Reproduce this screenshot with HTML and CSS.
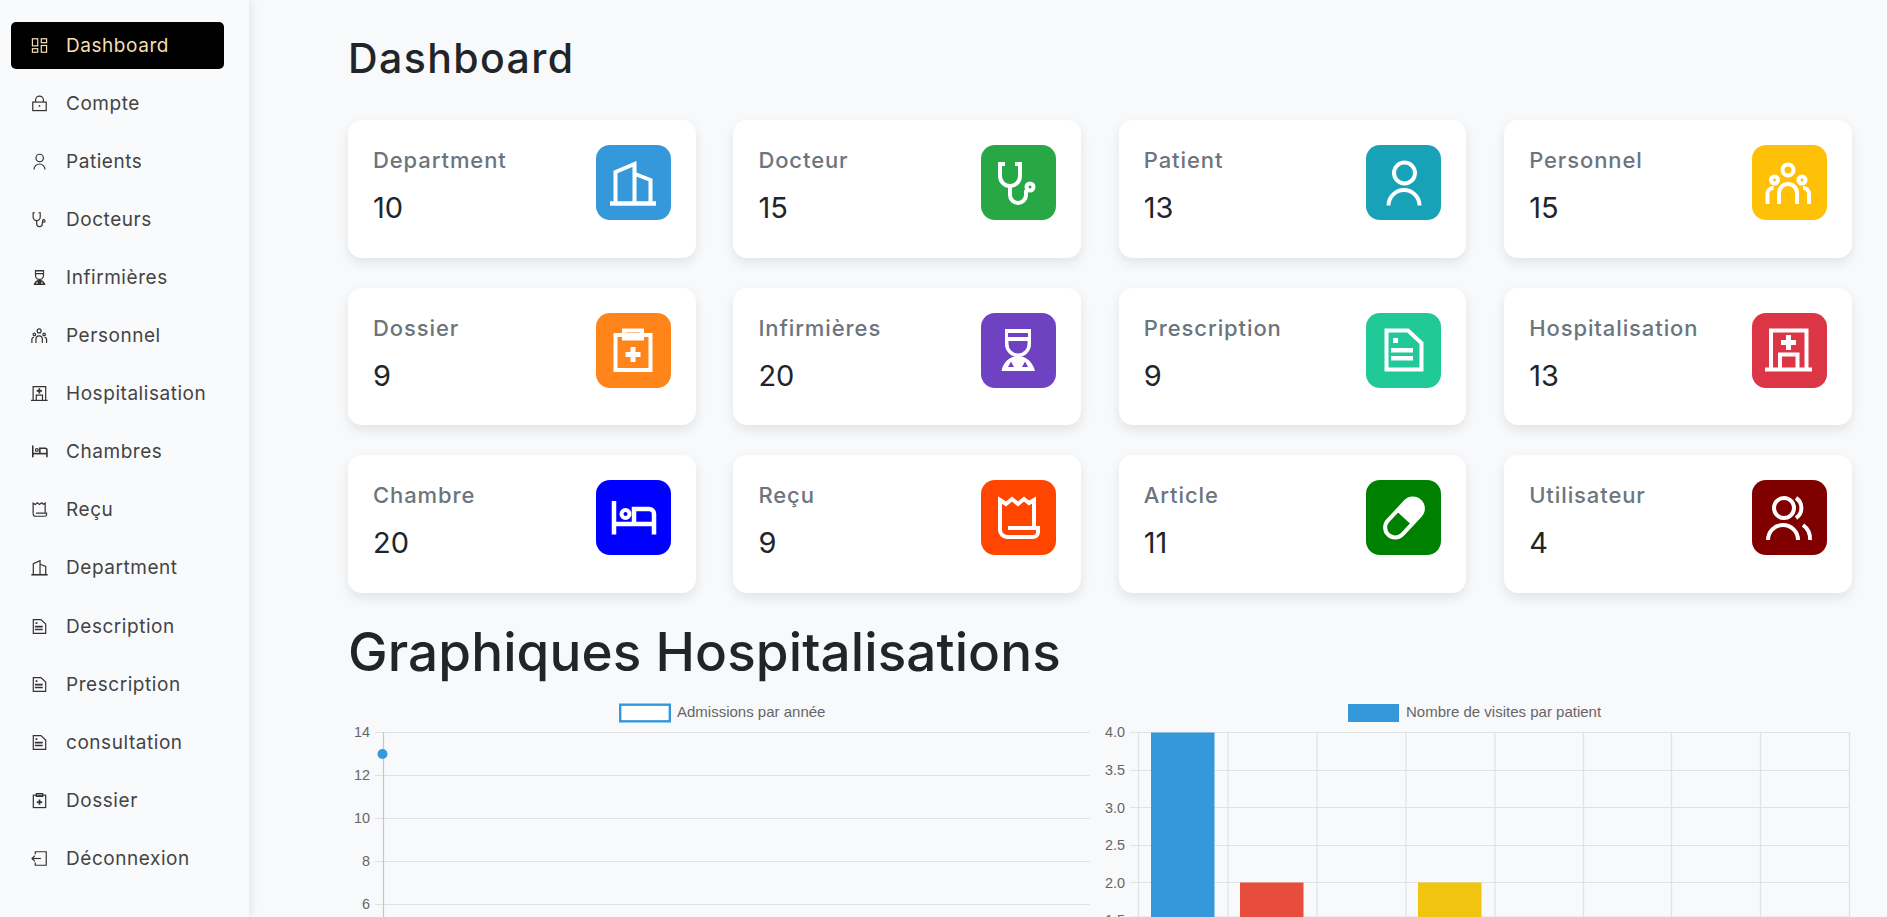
FILE: index.html
```html
<!DOCTYPE html>
<html lang="fr">
<head>
<meta charset="utf-8">
<title>Dashboard</title>
<link rel="stylesheet" href="styles.css">
</head>
<body>
<svg class="defs" width="0" height="0" aria-hidden="true">
  <symbol id="i-grid" viewBox="0 0 48 48"><rect x="4" y="5" width="15" height="20"/><rect x="29" y="5" width="15" height="11"/><rect x="4" y="33" width="15" height="10"/><rect x="29" y="24" width="15" height="19"/></symbol>
  <symbol id="i-lock" viewBox="0 0 48 48"><rect x="5" y="20" width="38" height="24"/><path d="M13 20v-6a11 11 0 0 1 22 0v6"/><circle class="f" cx="24" cy="31" r="2.5"/></symbol>
  <symbol id="i-building" viewBox="0 0 48 48"><path d="M1 44.500H47" class="thick"/><path d="M6.500 44V13L25.500 5V44"/><path d="M26 15L41.500 21V44"/></symbol>
  <symbol id="i-steth" viewBox="0 0 48 48"><path d="M11 5H6V17a10 10 0 0 0 20 0V5H21"/><path d="M16 27V36a8 8 0 0 0 16 0V31"/><circle cx="36" cy="28" r="3.500"/></symbol>
  <symbol id="i-user" viewBox="0 0 48 48"><circle cx="24.500" cy="14" r="10.500"/><path d="M8.500 46.500a15.500 15.500 0 0 1 31 0"/></symbol>
  <symbol id="i-group" viewBox="0 0 48 48"><circle cx="23" cy="11" r="5.500"/><circle cx="9.500" cy="21" r="3.500"/><circle cx="37" cy="21" r="3.500"/><path d="M14 45V34a9 9 0 0 1 18 0V45"/><path d="M2.500 45V35a6 6 0 0 1 6-6"/><path d="M44 45V35a6 6 0 0 0-6-6"/></symbol>
  <symbol id="i-clip" viewBox="0 0 48 48"><rect x="6.500" y="9" width="35" height="35"/><rect x="15" y="4.500" width="18" height="8"/><path class="f" d="M21.500 21h5v5h5v5h-5v5h-5v-5h-5v-5h5z"/></symbol>
  <symbol id="i-nurse" viewBox="0 0 48 48"><path class="f" fill-rule="evenodd" d="M11 3H37V18a13 13 0 0 1-26 0ZM14 7V11H34V7ZM14.500 15V18a9.500 9.500 0 0 0 19 0V15Z"/><path class="f" fill-rule="evenodd" d="M7.500 45C9 37 15 30 24 30C33 30 39 37 41 45ZM14 41H20L17 35.500ZM28 41H34L31 35.500Z"/></symbol>
  <symbol id="i-doc" viewBox="0 0 48 48"><path d="M6.500 4.500H28L41.500 17V43.500H6.500Z"/><path class="f" d="M13 12h5v5h-5zM11 22h22v4.500H11zM11 30h22v4.500H11z"/></symbol>
  <symbol id="i-hosp" viewBox="0 0 48 48"><path d="M0 43.500H47"/><path d="M6 43V4.500H41.500V43"/><path class="f" d="M21 9h5v5h5v5h-5v5h-5v-5h-5v-5h5z"/><path d="M15 43V28.500H32.500V43"/></symbol>
  <symbol id="i-bed" viewBox="0 0 48 48"><path class="thick" d="M5 7V40.500"/><path class="thick" d="M5 30H45"/><path class="thick" d="M45 40.500V20a5 5 0 0 0-5-5H25V29"/><circle cx="16.500" cy="20" r="4"/></symbol>
  <symbol id="i-receipt" viewBox="0 0 48 48"><path d="M6 36V6L12 10 18 5 24 10 30 5 35 9 40 6V33"/><path d="M6 36a7 7 0 0 0 7 7H39a5 5 0 0 0 5-5V34H14"/></symbol>
  <symbol id="i-pill" viewBox="0 0 48 48"><g transform="rotate(43 24 24)"><rect x="14" y="1" width="20" height="46" rx="10"/><path class="f" d="M14 24V11a10 10 0 0 1 20 0V24Z"/></g></symbol>
  <symbol id="i-users" viewBox="0 0 48 48"><circle cx="19" cy="14" r="10"/><path d="M3 46a15 15 0 0 1 30 0"/><path d="M31 4a12 12 0 0 1 0 20"/><path d="M38 31a17 17 0 0 1 7 15"/></symbol>
  <symbol id="i-logout" viewBox="0 0 48 48"><path d="M12 12V5H43V43H12V35"/><path d="M28 24H3"/><path d="M11 16L3 24 11 32"/></symbol>
</svg>

<div class="app">
  <nav class="sidebar">
    <a class="nav-item active"><svg class="nav-ic"><use href="#i-grid"/></svg>Dashboard</a>
    <a class="nav-item"><svg class="nav-ic"><use href="#i-lock"/></svg>Compte</a>
    <a class="nav-item"><svg class="nav-ic"><use href="#i-user"/></svg>Patients</a>
    <a class="nav-item"><svg class="nav-ic"><use href="#i-steth"/></svg>Docteurs</a>
    <a class="nav-item"><svg class="nav-ic"><use href="#i-nurse"/></svg>Infirmières</a>
    <a class="nav-item"><svg class="nav-ic"><use href="#i-group"/></svg>Personnel</a>
    <a class="nav-item"><svg class="nav-ic"><use href="#i-hosp"/></svg>Hospitalisation</a>
    <a class="nav-item"><svg class="nav-ic"><use href="#i-bed"/></svg>Chambres</a>
    <a class="nav-item"><svg class="nav-ic"><use href="#i-receipt"/></svg>Reçu</a>
    <a class="nav-item"><svg class="nav-ic"><use href="#i-building"/></svg>Department</a>
    <a class="nav-item"><svg class="nav-ic"><use href="#i-doc"/></svg>Description</a>
    <a class="nav-item"><svg class="nav-ic"><use href="#i-doc"/></svg>Prescription</a>
    <a class="nav-item"><svg class="nav-ic"><use href="#i-doc"/></svg>consultation</a>
    <a class="nav-item"><svg class="nav-ic"><use href="#i-clip"/></svg>Dossier</a>
    <a class="nav-item"><svg class="nav-ic"><use href="#i-logout"/></svg>Déconnexion</a>
  </nav>

  <main class="main">
    <h1 class="title">Dashboard</h1>
    <section class="cards">
      <article class="card"><div><p class="label">Department</p><p class="value">10</p></div><span class="tile c-blue"><svg class="tile-ic"><use href="#i-building"/></svg></span></article>
      <article class="card"><div><p class="label">Docteur</p><p class="value">15</p></div><span class="tile c-green"><svg class="tile-ic"><use href="#i-steth"/></svg></span></article>
      <article class="card"><div><p class="label">Patient</p><p class="value">13</p></div><span class="tile c-cyan"><svg class="tile-ic"><use href="#i-user"/></svg></span></article>
      <article class="card"><div><p class="label">Personnel</p><p class="value">15</p></div><span class="tile c-yellow"><svg class="tile-ic"><use href="#i-group"/></svg></span></article>
      <article class="card"><div><p class="label">Dossier</p><p class="value">9</p></div><span class="tile c-orange"><svg class="tile-ic"><use href="#i-clip"/></svg></span></article>
      <article class="card"><div><p class="label">Infirmières</p><p class="value">20</p></div><span class="tile c-purple"><svg class="tile-ic"><use href="#i-nurse"/></svg></span></article>
      <article class="card"><div><p class="label">Prescription</p><p class="value">9</p></div><span class="tile c-teal"><svg class="tile-ic"><use href="#i-doc"/></svg></span></article>
      <article class="card"><div><p class="label">Hospitalisation</p><p class="value">13</p></div><span class="tile c-red"><svg class="tile-ic"><use href="#i-hosp"/></svg></span></article>
      <article class="card"><div><p class="label">Chambre</p><p class="value">20</p></div><span class="tile c-pure"><svg class="tile-ic"><use href="#i-bed"/></svg></span></article>
      <article class="card"><div><p class="label">Reçu</p><p class="value">9</p></div><span class="tile c-oranger"><svg class="tile-ic"><use href="#i-receipt"/></svg></span></article>
      <article class="card"><div><p class="label">Article</p><p class="value">11</p></div><span class="tile c-dgreen"><svg class="tile-ic"><use href="#i-pill"/></svg></span></article>
      <article class="card"><div><p class="label">Utilisateur</p><p class="value">4</p></div><span class="tile c-maroon"><svg class="tile-ic"><use href="#i-users"/></svg></span></article>
    </section>

    <h2 class="subtitle">Graphiques Hospitalisations</h2>
    <section class="charts">
      <svg class="chart chart-left" viewBox="0 0 742 222">
        <rect class="lg-line" x="272.200" y="9.700" width="49.600" height="16.600"/>
        <text class="ct" x="329" y="22">Admissions par année</text>
        <g class="grid">
          <path d="M27 37.500H742M27 80.500H742M27 123.500H742M27 166.500H742M27 209.500H742"/>
        </g>
        <path class="axis" d="M35.500 37V222"/>
        <g class="ticks">
          <text x="22" y="42">14</text><text x="22" y="85">12</text><text x="22" y="128">10</text><text x="22" y="171">8</text><text x="22" y="214">6</text>
        </g>
        <circle class="pt" cx="34.500" cy="59" r="5"/>
      </svg>
      <svg class="chart chart-right" viewBox="0 0 752 222">
        <rect class="lg-bar" x="248" y="9" width="51" height="18"/>
        <text class="ct" x="306" y="22">Nombre de visites par patient</text>
        <g class="grid">
          <path d="M30 37.500H749.500M30 75.500H749.500M30 112.500H749.500M30 150.500H749.500M30 187.500H749.500M30 222H749.500"/>
          <path d="M38.500 37V222M128 37V222M217 37V222M306 37V222M395 37V222M483.500 37V222M571.500 37V222M660.500 37V222M749.500 37V222"/>
        </g>
        <rect class="b-blue" x="51" y="37.500" width="63.500" height="190"/>
        <rect class="b-red" x="140" y="187.500" width="63.500" height="40"/>
        <rect class="b-yellow" x="318" y="187.500" width="63.500" height="40"/>
        <g class="ticks">
          <text x="25" y="42">4.0</text><text x="25" y="80">3.5</text><text x="25" y="117.500">3.0</text><text x="25" y="155">2.5</text><text x="25" y="192.500">2.0</text><text x="25" y="230">1.5</text>
        </g>
      </svg>
    </section>
  </main>
</div>
</body>
</html>
```

FILE: styles.css
```css
* { box-sizing: border-box; }
html, body { margin: 0; height: 100%; overflow: hidden; }
body { background: #f8f9fb; font-family: Inter, "Open Sans", sans-serif; color: #212529; }
.defs { display: block; height: 0; }
symbol * { fill: none; stroke: currentColor; stroke-linecap: butt; stroke-linejoin: miter; }
symbol .f { fill: currentColor; stroke: none; }
symbol .thick { stroke-width: 4.500; }

.app { display: flex; height: 100vh; }

.sidebar {
  flex: 0 0 249px;
  display: flex;
  flex-direction: column;
  gap: 11.120px;
  padding: 22px 25px 0 11px;
  background: #f9fafc;
  box-shadow: 2px 0 8px rgba(0, 0, 0, .09);
  z-index: 1;
}
.nav-item {
  display: flex;
  align-items: center;
  gap: 18px;
  height: 47px;
  padding-left: 20px;
  padding-bottom: 1px;
  border-radius: 5px;
  color: #444;
  font-size: 19px;
  letter-spacing: .55px;
}
.nav-item.active { background: #000; color: #f5deb3; }
.nav-ic { width: 17px; height: 17px; flex: none; stroke-width: 3.400; color: #333; }
.active .nav-ic { color: #f5deb3; }

.main { flex: 1; min-width: 0; padding: 34px 35px 0 99px; }
.title { margin: 0; font-size: 41px; line-height: 48px; font-weight: 500; letter-spacing: 1.400px; color: #212529; }
.cards {
  display: grid;
  grid-template-columns: repeat(4, 347.600px);
  column-gap: 37.800px;
  row-gap: 30px;
  margin-top: 38px;
}
.card {
  height: 137.500px;
  display: flex;
  justify-content: space-between;
  align-items: flex-start;
  padding: 25px;
  background: #fff;
  border-radius: 14px;
  box-shadow: 0 5px 12px rgba(0, 0, 0, .09);
}
.label { margin: 0; font-size: 22px; line-height: 30px; font-weight: 500; letter-spacing: .900px; color: #6c757d; }
.value { margin: 17px 0 0; font-size: 29px; line-height: 32px; color: #212529; }
.tile {
  flex: none;
  display: flex;
  align-items: center;
  justify-content: center;
  width: 75px;
  height: 75px;
  border-radius: 14px;
  color: #fff;
}
.tile-ic { width: 48px; height: 48px; stroke-width: 4; }
.c-blue { background: #3498db; }
.c-green { background: #28a745; }
.c-cyan { background: #17a2b8; }
.c-yellow { background: #ffc107; }
.c-orange { background: #ff851b; }
.c-purple { background: #6f42c1; }
.c-teal { background: #20c997; }
.c-red { background: #dc3545; }
.c-pure { background: #0000ff; }
.c-oranger { background: #ff4500; }
.c-dgreen { background: #008000; }
.c-maroon { background: #800000; }

.subtitle { margin: 27.500px 0 0; font-size: 53px; line-height: 64px; font-weight: 500; letter-spacing: .100px; color: #212529; }
.charts { display: flex; gap: 10px; margin-top: 11px; }
.chart { flex: none; height: 222px; display: block; font-family: "Liberation Sans", Arial, sans-serif; font-size: 15px; }
.chart-left { width: 742px; }
.chart-right { width: 752px; }
.ct { fill: #666; }
.ticks text { fill: #666; text-anchor: end; font-size: 14.400px; }
.grid path { fill: none; stroke: #e1e2e4; stroke-width: 1.200; }
.axis { fill: none; stroke: #c4c6c8; stroke-width: 1.200; }
.lg-line { fill: #fff; stroke: #3498db; stroke-width: 2.400; }
.lg-bar { fill: #3498db; }
.pt { fill: #3498db; }
.b-blue { fill: #3498db; }
.b-red { fill: #e74c3c; }
.b-yellow { fill: #f1c40f; }
```
